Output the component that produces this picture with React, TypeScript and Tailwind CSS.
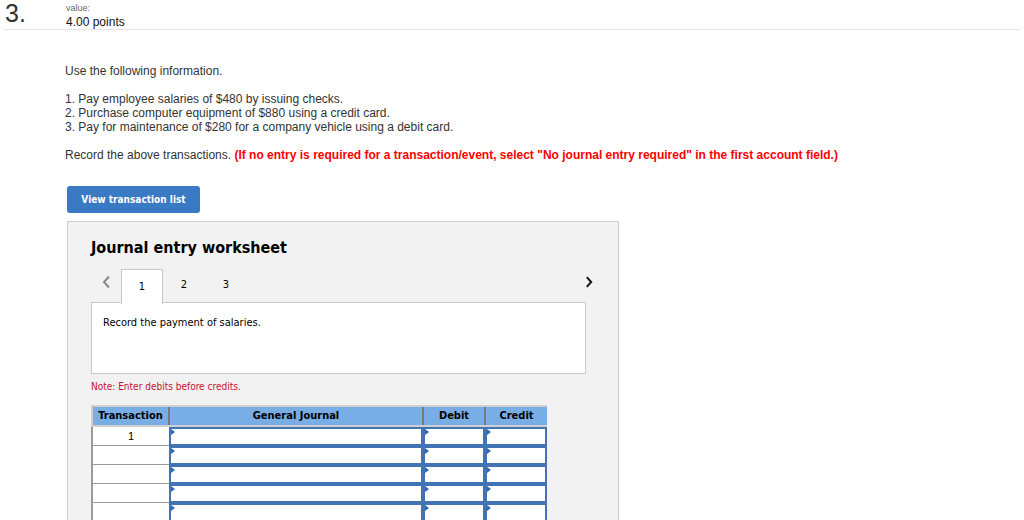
import React from "react";

const ws = { fontFamily: '"DejaVu Sans Condensed", "DejaVu Sans", Verdana, sans-serif' };

function InputCell({ w }: { w: string }) {
  return (
    <div className={`relative h-[19px] ${w} border-2 border-[#4173b5] bg-white`}>
      <div className="absolute left-0 top-0 h-0 w-0 border-y-[3px] border-l-[4px] border-y-transparent border-l-[#2f69b3]" />
    </div>
  );
}

export default function App() {
  const rows = ["1", "", "", "", ""];
  return (
    <div className="h-[520px] w-[1024px] overflow-hidden bg-white text-[#333]" style={{ fontFamily: '"Liberation Sans", Arial, sans-serif' }}>
      <div className="mx-[3px] flex h-[30px] border-b border-[#e6e6e6]">
        <div className="w-[63px] pl-[2px] text-[25px] leading-[26px] text-[#333]">3.</div>
        <div className="flex flex-col pt-[3px]">
          <span className="text-[9px] leading-[10px] text-[#666]">value:</span>
          <span className="mt-[2px] text-[12px] leading-[14px] text-[#111]">4.00 points</span>
        </div>
      </div>

      <div className="pl-[65px] pt-[34px] text-[12px] leading-[14px]">
        <p>Use the following information.</p>
        <div className="mt-[14px]">
          <p>1. Pay employee salaries of $480 by issuing checks.</p>
          <p>2. Purchase computer equipment of $880 using a credit card.</p>
          <p>3. Pay for maintenance of $280 for a company vehicle using a debit card.</p>
        </div>
        <p className="mt-[14px]">
          Record the above transactions.{" "}
          <span className="font-bold text-[#ff0000]">
            (If no entry is required for a transaction/event, select "No journal entry required" in the first account field.)
          </span>
        </p>
        <button
          className="ml-[2px] mt-[24px] flex h-[27px] w-[133px] items-center justify-center rounded-[3px] bg-[#3a79c4] text-[10px] font-bold text-white"
          style={ws}
        >
          View transaction list
        </button>

        <div className="ml-[2px] mt-[8px] h-[320px] w-[552px] border border-[#cccccc] bg-[#f2f2f2] pl-[23px] pt-[16px]" style={ws}>
          <h2 className="text-[16px] font-bold leading-[20px] text-black">Journal entry worksheet</h2>
          <div className="mt-[10px] flex h-[34px] w-[502px] items-center">
            <span className="flex w-[30px] -translate-y-[3px] justify-center">
              <svg width="9" height="14" viewBox="0 0 9 14"><path d="M7 1.5 L2 7 L7 12.5" fill="none" stroke="#8a8a8a" strokeWidth="2" /></svg>
            </span>
            <div className="flex h-[35px] w-[42px] translate-y-[1px] items-center justify-center border border-b-0 border-[#c8c8c8] bg-white text-[11px] text-black">1</div>
            <div className="flex w-[42px] justify-center text-[11px] text-black">2</div>
            <div className="flex w-[42px] justify-center text-[11px] text-black">3</div>
            <span className="ml-auto flex w-[8px] -translate-y-[3px] justify-center">
              <svg width="9" height="14" viewBox="0 0 9 14"><path d="M2 1.5 L7 7 L2 12.5" fill="none" stroke="#111" strokeWidth="2.2" /></svg>
            </span>
          </div>
          <div className="h-[72px] w-[495px] border border-[#c8c8c8] bg-white px-[11px] pt-[13px] text-[11px] leading-[14px] text-black">
            Record the payment of salaries.
          </div>
          <p className="mt-[7px] text-[10px] leading-[12px] text-[#c8102e]">Note: Enter debits before credits.</p>

          <div className="mt-[12px] w-[456px] text-[11px]">
            <div className="flex h-[22px] border-y-2 border-l-2 border-[#d0d0d0] bg-[#78ade6] font-bold text-black">
              <div className="flex w-[77px] items-center justify-center border-r-2 border-[#7a7a7a]">Transaction</div>
              <div className="flex w-[254px] items-center justify-center border-r-2 border-[#7a7a7a]">General Journal</div>
              <div className="flex w-[62px] items-center justify-center border-r-2 border-[#7a7a7a]">Debit</div>
              <div className="flex w-[61px] items-center justify-center">Credit</div>
            </div>
            {rows.map((r, i) => (
              <div key={i} className="flex">
                <div className="flex h-[19px] w-[78px] items-center justify-center border-b border-l-2 border-[#9a9a9a] bg-white text-black" style={{ fontFamily: '"Liberation Sans", Arial, sans-serif' }}>
                  {r}
                </div>
                <InputCell w="w-[254px]" />
                <InputCell w="w-[62px]" />
                <InputCell w="w-[62px]" />
              </div>
            ))}
          </div>
        </div>
      </div>
    </div>
  );
}
